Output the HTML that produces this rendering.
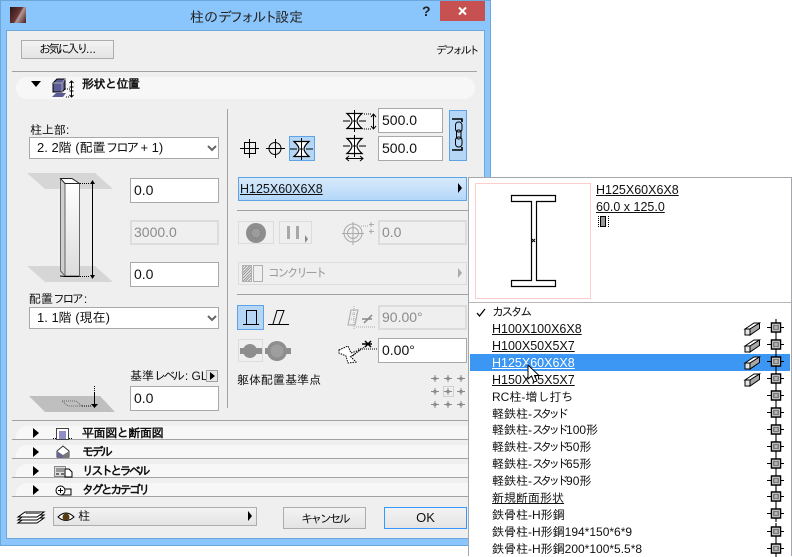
<!DOCTYPE html>
<html><head><meta charset="utf-8">
<style>
html,body{margin:0;padding:0;background:#fff}
body{width:792px;height:556px;position:relative;overflow:hidden;font:12px/14px "Liberation Sans","IPAGothic","Noto Sans CJK JP",sans-serif;color:#111}
.a{position:absolute;box-sizing:border-box}
.t{position:absolute;white-space:nowrap}
.b{font-weight:bold}
.k{letter-spacing:-2.6px}
.s{letter-spacing:-3.8px}
.inp{position:absolute;box-sizing:border-box;background:#fff;border:1px solid #a9a9a9;padding-left:3px;font-size:14px;line-height:23px;color:#111}
.dis{background:#efefef;border:2px solid #dcdcdc;outline:0;color:#8c8c8c;padding-left:2px;line-height:21px}
.sel{position:absolute;box-sizing:border-box;background:#fff;border:1px solid #a9a9a9;left:29px;width:190px;padding-left:7px;font-size:13px;line-height:20px}
.btn{position:absolute;box-sizing:border-box;background:linear-gradient(#f3f3f3,#e4e4e4);border:1px solid #adadad;text-align:center}
.ln{position:absolute;height:1px;background:#a2a2a2}
.band{position:absolute;left:16px;width:452px;background:#f7f7f7;border-radius:11px 0 0 0}
.tri{position:absolute;width:0;height:0;border-top:5px solid transparent;border-bottom:5px solid transparent;border-left:6px solid #000}
.m{position:absolute;left:492px;white-space:nowrap;font-size:12px;line-height:14px}
.u{text-decoration:underline}
.l{position:absolute;left:492px;white-space:nowrap;font-size:12.5px;line-height:14px;text-decoration:underline}
svg{position:absolute;overflow:visible}
</style></head><body>
<svg width="0" height="0" style="position:absolute"><defs>
<g id="cr"><path d="M-1 8.500H16M8 0V17" stroke="#000" stroke-width="1.100" fill="none"/><rect x="3.500" y="4" width="9" height="9" fill="#fff" stroke="#000" stroke-width="1.500"/><rect x="5" y="5.500" width="6" height="6" fill="#7c7c7c"/><rect x="6.500" y="7" width="3" height="3" fill="#b5b5b5"/></g>
<g id="bm"><path d="M1 7 10 1H15.500L6 7Z" fill="#fff" stroke="#000"/><path d="M6 7 15.500 1V6.500L6 13Z" fill="#a8a8a8" stroke="#000"/><path d="M1 7H6V13H1Z" fill="#e6e6e6" stroke="#000"/></g>
<g id="dg"><path d="M-4 .5H4M0 -3V4" stroke="#8c8c8c"/><rect x="-1.500" y="-1" width="3" height="3" fill="#8c8c8c"/></g>
<g id="hb"><path d="M3 2.500H18Q13 7 13 10T18 17.500H3Q8 13 8 10T3 2.500Z" fill="#fff" stroke="#000" stroke-width="1.200"/><path d="M-1 10H6M9 10H12M15 10H22M10.500 -1V21" stroke="#000"/></g>
</defs></svg>

<!-- window -->
<div class="a" style="left:0;top:0;width:491px;height:546px;background:#8ac5fb;border:1px solid #6da6d9"></div>
<div class="a" style="left:7px;top:31px;width:477px;height:507px;background:#efefef;outline:1px solid #6fa7dc"></div>
<div class="a" style="left:10px;top:7px;width:16px;height:16px;background:linear-gradient(120deg,#2a1616,#6a3535 50%,#b09a9a 58%,#4a1818)"></div>
<div class="t" style="left:190px;top:8px;font-size:14px;line-height:18px;color:#222">柱の<span class="k">デフォルト</span>設定</div>
<div class="t b" style="left:422px;top:2px;font-size:14px;line-height:18px;color:#222">?</div>
<div class="a" style="left:440px;top:1px;width:45px;height:20px;background:#c75050"></div>
<svg style="left:458px;top:7px" width="9" height="8"><path d="M1 0.5 8 7.5M8 0.5 1 7.5" stroke="#fff" stroke-width="2"/></svg>

<div class="btn" style="left:21px;top:40px;width:93px;height:19px;line-height:17px"><span class="k">お気に入り</span>...</div>
<div class="t" style="left:436px;top:44px;font-size:11px;letter-spacing:-2.8px">デフォルト</div>

<div class="ln" style="left:12px;top:71px;width:465px"></div>
<div class="a" style="left:16px;top:77px;width:459px;height:22px;background:#f7f7f7;border-radius:11px"></div>
<div class="a" style="left:31px;top:81px;width:0;height:0;border-left:5px solid transparent;border-right:5px solid transparent;border-top:6px solid #000"></div>
<svg style="left:52px;top:78px" width="24" height="20"><path d="M1 5 5 1H13V11L10 14H1Z" fill="#5a5a96" stroke="#000"/><path d="M1 5H10V14M10 5 13 1" stroke="#aaa" fill="none"/><path d="M0 19 4 15H14L11 19Z" fill="#5a5a96"/><path d="M13 11H18M14 19H18" stroke="#000" stroke-dasharray="1 1" fill="none"/><path d="M19.500 3V19M17.500 5 19.500 3 21.500 5M17.500 9H21.500M17.500 13H21.500M17.500 17 19.500 19 21.500 17" stroke="#000" fill="none"/></svg>
<div class="t b" style="left:82px;top:77px;letter-spacing:-.5px">形状と位置</div>
<div class="a" style="left:227px;top:109px;width:1px;height:299px;background:#a2a2a2"></div>

<!-- left column -->
<div class="t" style="left:30px;top:123px">柱上部:</div>
<div class="sel" style="top:137px;height:22px">2. 2階 (配置<span class="k">フロア</span>  + 1)</div>
<svg style="left:207px;top:145px" width="10" height="7"><path d="M1 1 5 5 9 1" stroke="#666" stroke-width="2" fill="none"/></svg>

<svg style="left:0;top:0" width="130" height="420">
<defs><linearGradient id="c" x1="0" y1="0" x2="0" y2="1"><stop offset="0" stop-color="#fff"/><stop offset="1" stop-color="#dcdcdc"/></linearGradient></defs>
<path d="M27 173H95L113 189H45Z" fill="#d6d6d6"/>
<path d="M27 266H95L113 282H45Z" fill="#d6d6d6"/>
<path d="M65 183H79.500V276H65Z" fill="url(#c)"/>
<path d="M60.500 178 65 183V276L60.500 271Z" fill="#cfcfcf"/>
<path d="M65 183.500V276H79.500V183.500" fill="none" stroke="#666"/>
<path d="M60.500 178.500V271L65 276" fill="none" stroke="#666"/>
<path d="M60.500 178.500H72L79.500 183.500H65Z" fill="#fff" stroke="#222"/>
<path d="M60 276 65 276.500H79.500" stroke="#000" fill="none"/>
<path d="M80 183.500H90M80 276.500H90" stroke="#000" stroke-dasharray="1 1"/>
<path d="M92.500 181V277" stroke="#000"/>
<path d="M90 184H95L92.500 180ZM90 275H95L92.500 279Z" fill="#000"/>
<path d="M29 396H100L115 412H45Z" fill="#bfbfbf"/>
<path d="M62 401H76L82 406H68Z" fill="none" stroke="#666" stroke-dasharray="1 1"/>
<path d="M82 406H92" stroke="#000" stroke-dasharray="1 1"/>
<path d="M94.500 386V393" stroke="#000" stroke-dasharray="1 1"/>
<path d="M94.500 393V404" stroke="#000"/>
<path d="M91 404H98L94.500 408Z" fill="#000"/>
</svg>

<div class="inp" style="left:130px;top:178px;width:89px;height:25px">0.0</div>
<div class="inp dis" style="left:130px;top:220px;width:89px;height:25px">3000.0</div>
<div class="inp" style="left:130px;top:262px;width:89px;height:25px">0.0</div>
<div class="t" style="left:29px;top:292px">配置<span class="k">フロ</span>ア:</div>
<div class="sel" style="top:307px;height:22px">1. 1階 (現在)</div>
<svg style="left:207px;top:315px" width="10" height="7"><path d="M1 1 5 5 9 1" stroke="#666" stroke-width="2" fill="none"/></svg>
<div class="t" style="left:130px;top:369px">基準<span class="k">レベ</span>ル: GL</div>
<div class="a" style="left:206px;top:370px;width:12px;height:12px;background:#e8e8e8;border:1px solid #a0a0a0"></div>
<div class="tri" style="left:210px;top:372px;border-top-width:4px;border-bottom-width:4px;border-left-width:5px"></div>
<div class="inp" style="left:130px;top:386px;width:89px;height:25px">0.0</div>

<!-- right column -->
<svg style="left:240px;top:120px" width="72" height="46">
<g fill="none" stroke="#000">
<rect x="4.500" y="22.500" width="11" height="11"/><path d="M0 28.500H19M9.500 19V38"/>
<circle cx="35" cy="28.500" r="6"/><path d="M26 28.500H45M35.500 19V38"/>
</g></svg>
<div class="a" style="left:289px;top:136px;width:26px;height:25px;background:#b5d6f5;border:1px solid #5ea3e6"></div>
<svg style="left:291px;top:139px" width="21" height="20"><use href="#hb"/></svg>
<svg style="left:344px;top:111px" width="21" height="20"><use href="#hb"/><path d="M20 3H28M20 18H28" stroke="#000" stroke-dasharray="1 1"/><path d="M29.500 3V18M27 6 29.500 3 32 6M27 15 29.500 18 32 15" stroke="#000" fill="none"/></svg>
<svg style="left:344px;top:136px" width="21" height="24"><use href="#hb"/><path d="M2 22.500H19M5 20 2 22.500 5 25M16 20 19 22.500 16 25" stroke="#000" fill="none"/></svg>
<div class="inp" style="left:378px;top:108px;width:65px;height:25px">500.0</div>
<div class="inp" style="left:378px;top:136px;width:65px;height:25px">500.0</div>
<div class="a" style="left:449px;top:110px;width:18px;height:51px;background:#b5d6f5;border:1px solid #5ea3e6"></div>
<svg style="left:450px;top:117px" width="16" height="38"><path d="M2 2H12V5M2 33H12V30" stroke="#000" stroke-width="1.600" fill="none"/><rect x="5.500" y="5" width="6.500" height="10" rx="3" fill="none" stroke="#000"/><rect x="6.500" y="13" width="4.500" height="9" rx="2" fill="none" stroke="#000"/><rect x="5.500" y="20" width="6.500" height="10" rx="3" fill="none" stroke="#000"/></svg>

<div class="a" style="left:238px;top:177px;width:229px;height:24px;background:linear-gradient(#d8eafc,#b4d7f9);border:1px solid #5ea3e6"></div>
<div class="t u" style="left:240px;top:182px;font-size:12.5px">H125X60X6X8</div>
<div class="tri" style="left:458px;top:183px;border-left-width:4px"></div>
<div class="ln" style="left:237px;top:210px;width:232px"></div>

<div class="a" style="left:238px;top:221px;width:36px;height:23px;border:1px solid #dcdcdc"></div>
<svg style="left:245px;top:222px" width="22" height="22"><circle cx="11" cy="11" r="10" fill="#8e8e8e"/><circle cx="11" cy="11" r="5" fill="#9c9c9c" stroke="#777" stroke-dasharray="1 1"/></svg>
<div class="a" style="left:279px;top:221px;width:33px;height:23px;border:1px solid #dcdcdc"></div>
<div class="a" style="left:287px;top:226px;width:3px;height:13px;background:#a8a8a8"></div>
<div class="a" style="left:296px;top:226px;width:3px;height:13px;background:#a8a8a8"></div>
<div class="a" style="left:305px;top:235px;border-top:4px solid transparent;border-bottom:4px solid transparent;border-left:3px solid #888"></div>
<svg style="left:343px;top:221px" width="32" height="24" fill="none" stroke="#aaa"><circle cx="10" cy="12" r="9"/><circle cx="10" cy="12" r="5.500"/><path d="M-1 12.500H21M10 1V24"/><path d="M18 5H26" stroke-dasharray="1 1"/><path d="M28 1V6M26 3.500H31M28 8V13M26 10.500H31"/></svg>
<div class="inp dis" style="left:378px;top:220px;width:89px;height:25px;padding-left:2px">0.0</div>

<div class="a" style="left:238px;top:262px;width:229px;height:23px;border:1px solid #dcdcdc"></div>
<div class="a" style="left:242px;top:265px;width:10px;height:17px;border:1px solid #b0b0b0;background:repeating-linear-gradient(135deg,#999 0 1px,#eee 1px 2px)"></div>
<div class="a" style="left:253px;top:265px;width:10px;height:17px;border:1px solid #b0b0b0"></div>
<div class="t k" style="left:268px;top:266px;color:#999">コンクリート</div>
<div class="tri" style="left:458px;top:268px;border-left:4px solid #aaa"></div>
<div class="ln" style="left:237px;top:294px;width:232px"></div>

<div class="a" style="left:237px;top:305px;width:27px;height:25px;background:#b5d6f5;border:1px solid #5ea3e6"></div>
<svg style="left:237px;top:305px" width="70" height="26" fill="none" stroke="#000"><path d="M9.500 19V5.500H19.500V19"/><path d="M6 19.500H22"/><path d="M36 19 40 5.500H47L42 19"/><path d="M31 19.500H52"/></svg>
<svg style="left:346px;top:306px" width="30" height="25" fill="none" stroke="#aaa"><path d="M5 4H12L9 19H2Z"/><path d="M4 8 11 8M3 13 10 13" stroke-dasharray="1 1"/><path d="M8 0V23" stroke-dasharray="1 1"/><path d="M10 21H29" stroke-dasharray="1 1"/><path d="M16 13 26 13M26 9 18 17" stroke="#888" stroke-width="1.500"/></svg>
<div class="inp dis" style="left:378px;top:305px;width:89px;height:25px">90.00°</div>

<div class="a" style="left:238px;top:339px;width:25px;height:23px;border:1px solid #dcdcdc"></div>
<svg style="left:239px;top:339px" width="60" height="24"><path d="M1 9H23V15H1ZM26 9H52V15H26Z" fill="#8e8e8e"/><circle cx="11" cy="12" r="7" fill="#8e8e8e"/><circle cx="38" cy="12" r="10" fill="#8e8e8e"/><circle cx="38" cy="12" r="6.500" fill="#9e9e9e"/></svg>
<svg style="left:336px;top:338px" width="42" height="26" fill="none" stroke="#000"><path d="M3 12 12 8 15 15 24 12 15 19 20 24 12 25 10 18 3 15Z" fill="#fff" stroke-dasharray="1.500 1"/><path d="M14 19 30 8" stroke-dasharray="1 1"/><path d="M22 12H42" stroke-dasharray="1 1" transform="translate(0 -1)"/><path d="M29 9 35 3M29 3 35 9 M26 6H36" stroke-width="1.500"/></svg>
<div class="inp" style="left:378px;top:338px;width:89px;height:25px">0.00°</div>
<div class="t" style="left:237px;top:373px">躯体配置基準点</div>
<div class="a" style="left:443px;top:386px;width:11px;height:11px;border:1px solid #d0d0d0"></div>
<svg style="left:429px;top:375px" width="40" height="32"><use href="#dg" x="6" y="3"/><use href="#dg" x="19" y="3"/><use href="#dg" x="32" y="3"/><use href="#dg" x="6" y="16"/><use href="#dg" x="19" y="16"/><use href="#dg" x="32" y="16"/><use href="#dg" x="6" y="29"/><use href="#dg" x="19" y="29"/><use href="#dg" x="32" y="29"/></svg>

<!-- collapsed sections -->
<div class="ln" style="left:12px;top:420px;width:457px"></div>
<div class="band" style="top:426px;height:13px"></div>
<div class="ln" style="left:12px;top:439px;width:457px"></div>
<div class="band" style="top:445px;height:13px"></div>
<div class="ln" style="left:12px;top:458px;width:457px"></div>
<div class="band" style="top:464px;height:13px"></div>
<div class="ln" style="left:12px;top:477px;width:457px"></div>
<div class="band" style="top:483px;height:13px"></div>
<div class="ln" style="left:12px;top:496px;width:457px"></div>
<div class="tri" style="left:33px;top:428px"></div>
<div class="tri" style="left:33px;top:447px"></div>
<div class="tri" style="left:33px;top:466px"></div>
<div class="tri" style="left:33px;top:485px"></div>
<svg style="left:53px;top:428px" width="20" height="12"><rect x="3.500" y=".500" width="12" height="11" fill="#fff" stroke="#444"/><rect x="6" y="3" width="7" height="8" fill="#8f8fc5"/><path d="M0 10.500H3M16 10.500H19" stroke="#000" stroke-dasharray="1 1"/></svg>
<svg style="left:56px;top:446px" width="16" height="12"><path d="M1 5 7 0 13 5V11H1Z" fill="#fff" stroke="#333"/><path d="M1 5 7 9V12H1Z" fill="#66668f"/><path d="M13 5 7 9V12H13Z" fill="#777"/></svg>
<svg style="left:54px;top:466px" width="20" height="12"><rect x=".500" y=".500" width="11" height="10" fill="#ddd" stroke="#888"/><path d="M2 3H10M2 5H10" stroke="#555"/><path d="M2 8H5M7 8H10" stroke="#000"/><path d="M11 3H15L18 6V11H11Z" fill="#fff" stroke="#000"/></svg>
<svg style="left:55px;top:485px" width="20" height="12"><circle cx="5.500" cy="5.500" r="4.500" fill="#fff" stroke="#000"/><path d="M3 5.500H8M5.500 3V8" stroke="#000"/><path d="M10 4H16V10H6" fill="none" stroke="#000"/></svg>
<div class="t b" style="left:82px;top:426px;letter-spacing:-.4px">平面図と断面図</div>
<div class="t b k" style="left:82px;top:445px">モデル</div>
<div class="t b k" style="left:82px;top:464px">リストとラベル</div>
<div class="t b k" style="left:82px;top:483px">タグとカテゴリ</div>

<!-- bottom -->
<svg style="left:17px;top:509px" width="28" height="17" fill="#fff" stroke="#000"><path d="M1 14H20L27 9H8Z"/><path d="M1 11H20L27 6H8Z"/><path d="M1 8H20L27 3H8Z"/><path d="M8 5H22L25 3H10Z" fill="#777" stroke="none"/></svg>
<div class="a" style="left:53px;top:507px;width:204px;height:19px;background:linear-gradient(#f3f3f3,#e4e4e4);border:1px solid #adadad"></div>
<svg style="left:57px;top:511px" width="20" height="12"><path d="M1 6Q9 -2 17 6 9 13 1 6Z" fill="#fff" stroke="#000"/><circle cx="9" cy="6" r="3.500" fill="#5a3a10"/></svg>
<div class="t" style="left:78px;top:509px;font-size:12px">柱</div>
<div class="tri" style="left:248px;top:511px;border-left-width:4px"></div>
<div class="btn k" style="left:283px;top:507px;width:83px;height:22px;line-height:22px">キャンセル</div>
<div class="btn" style="left:384px;top:507px;width:83px;height:22px;line-height:19px;border-color:#3399ff;font-size:13px">OK</div>

<!-- popup -->
<div class="a" style="left:468px;top:177px;width:324px;height:379px;background:#fff;border:1px solid #a6a6ad;border-bottom:0"></div>
<div class="a" style="left:475px;top:183px;width:116px;height:116px;border:1px solid #fcc"></div>
<svg style="left:510px;top:194px" width="48" height="95"><path d="M1.500 1.500H45.500V7.500H26.500V86.500H45.500V92.500H1.500V86.500H21.500V7.500H1.500Z" fill="#fff" stroke="#000" stroke-width="1.200"/><path d="M22 45 25 48M25 45 22 48" stroke="#000"/></svg>
<div class="t u" style="left:596px;top:183px;font-size:12.5px">H125X60X6X8</div>
<div class="t u" style="left:596px;top:200px;font-size:12.5px">60.0 x 125.0</div>
<div class="a" style="left:598px;top:216px;width:11px;height:11px;border-left:1px dotted #000;border-right:1px dotted #000"></div>
<div class="a" style="left:600px;top:216px;width:6px;height:11px;background:#999;border:1px solid #000"></div>
<div class="a" style="left:469px;top:302px;width:322px;height:1px;background:#b8b8b8"></div>
<div class="a" style="left:470px;top:354px;width:320px;height:17px;background:#3c96f3"></div>

<svg style="left:476px;top:308px" width="10" height="9"><path d="M1 5 3.500 8 9 1" stroke="#000" stroke-width="1.300" fill="none"/></svg>
<div class="m k" style="top:305px">カスタム</div>
<div class="l" style="top:322px">H100X100X6X8</div>
<div class="l" style="top:339px">H100X50X5X7</div>
<div class="l" style="top:356px;color:#fff">H125X60X6X8</div>
<div class="l" style="top:373px">H150X75X5X7</div>
<div class="m" style="top:390px">RC柱-増し打ち</div>
<div class="m" style="top:407px">軽鉄柱-<span class="s">スタッ</span>ド</div>
<div class="m" style="top:423px">軽鉄柱-<span class="s">スタッ</span><span class="k">ド</span>100形</div>
<div class="m" style="top:440px">軽鉄柱-<span class="s">スタッ</span><span class="k">ド</span>50形</div>
<div class="m" style="top:457px">軽鉄柱-<span class="s">スタッ</span><span class="k">ド</span>65形</div>
<div class="m" style="top:474px">軽鉄柱-<span class="s">スタッ</span><span class="k">ド</span>90形</div>
<div class="m u" style="top:491px">新規断面形状</div>
<div class="m" style="top:508px">鉄骨柱-H形鋼</div>
<div class="m" style="top:525px">鉄骨柱-H形鋼194*150*6*9</div>
<div class="m" style="top:542px">鉄骨柱-H形鋼200*100*5.5*8</div>

<svg style="left:744px;top:322px" width="16" height="14"><use href="#bm"/></svg>
<svg style="left:744px;top:339px" width="16" height="14"><use href="#bm"/></svg>
<svg style="left:744px;top:356px" width="16" height="14"><use href="#bm"/></svg>
<svg style="left:744px;top:373px" width="16" height="14"><use href="#bm"/></svg>
<svg style="left:768px;top:319px" width="16" height="17"><use href="#cr"/></svg>
<svg style="left:768px;top:336px" width="16" height="17"><use href="#cr"/></svg>
<svg style="left:768px;top:353px" width="16" height="17"><use href="#cr"/></svg>
<svg style="left:768px;top:370px" width="16" height="17"><use href="#cr"/></svg>
<svg style="left:768px;top:387px" width="16" height="17"><use href="#cr"/></svg>
<svg style="left:768px;top:404px" width="16" height="17"><use href="#cr"/></svg>
<svg style="left:768px;top:421px" width="16" height="17"><use href="#cr"/></svg>
<svg style="left:768px;top:438px" width="16" height="17"><use href="#cr"/></svg>
<svg style="left:768px;top:455px" width="16" height="17"><use href="#cr"/></svg>
<svg style="left:768px;top:472px" width="16" height="17"><use href="#cr"/></svg>
<svg style="left:768px;top:488px" width="16" height="17"><use href="#cr"/></svg>
<svg style="left:768px;top:505px" width="16" height="17"><use href="#cr"/></svg>
<svg style="left:768px;top:523px" width="16" height="17"><use href="#cr"/></svg>
<svg style="left:768px;top:540px" width="16" height="17"><use href="#cr"/></svg>

<svg style="left:527px;top:364px" width="16" height="20"><path d="M1 1V15L4.500 12 7 18 10 17 7.500 11.500H12Z" fill="#fff" stroke="#000"/></svg>
</body></html>
